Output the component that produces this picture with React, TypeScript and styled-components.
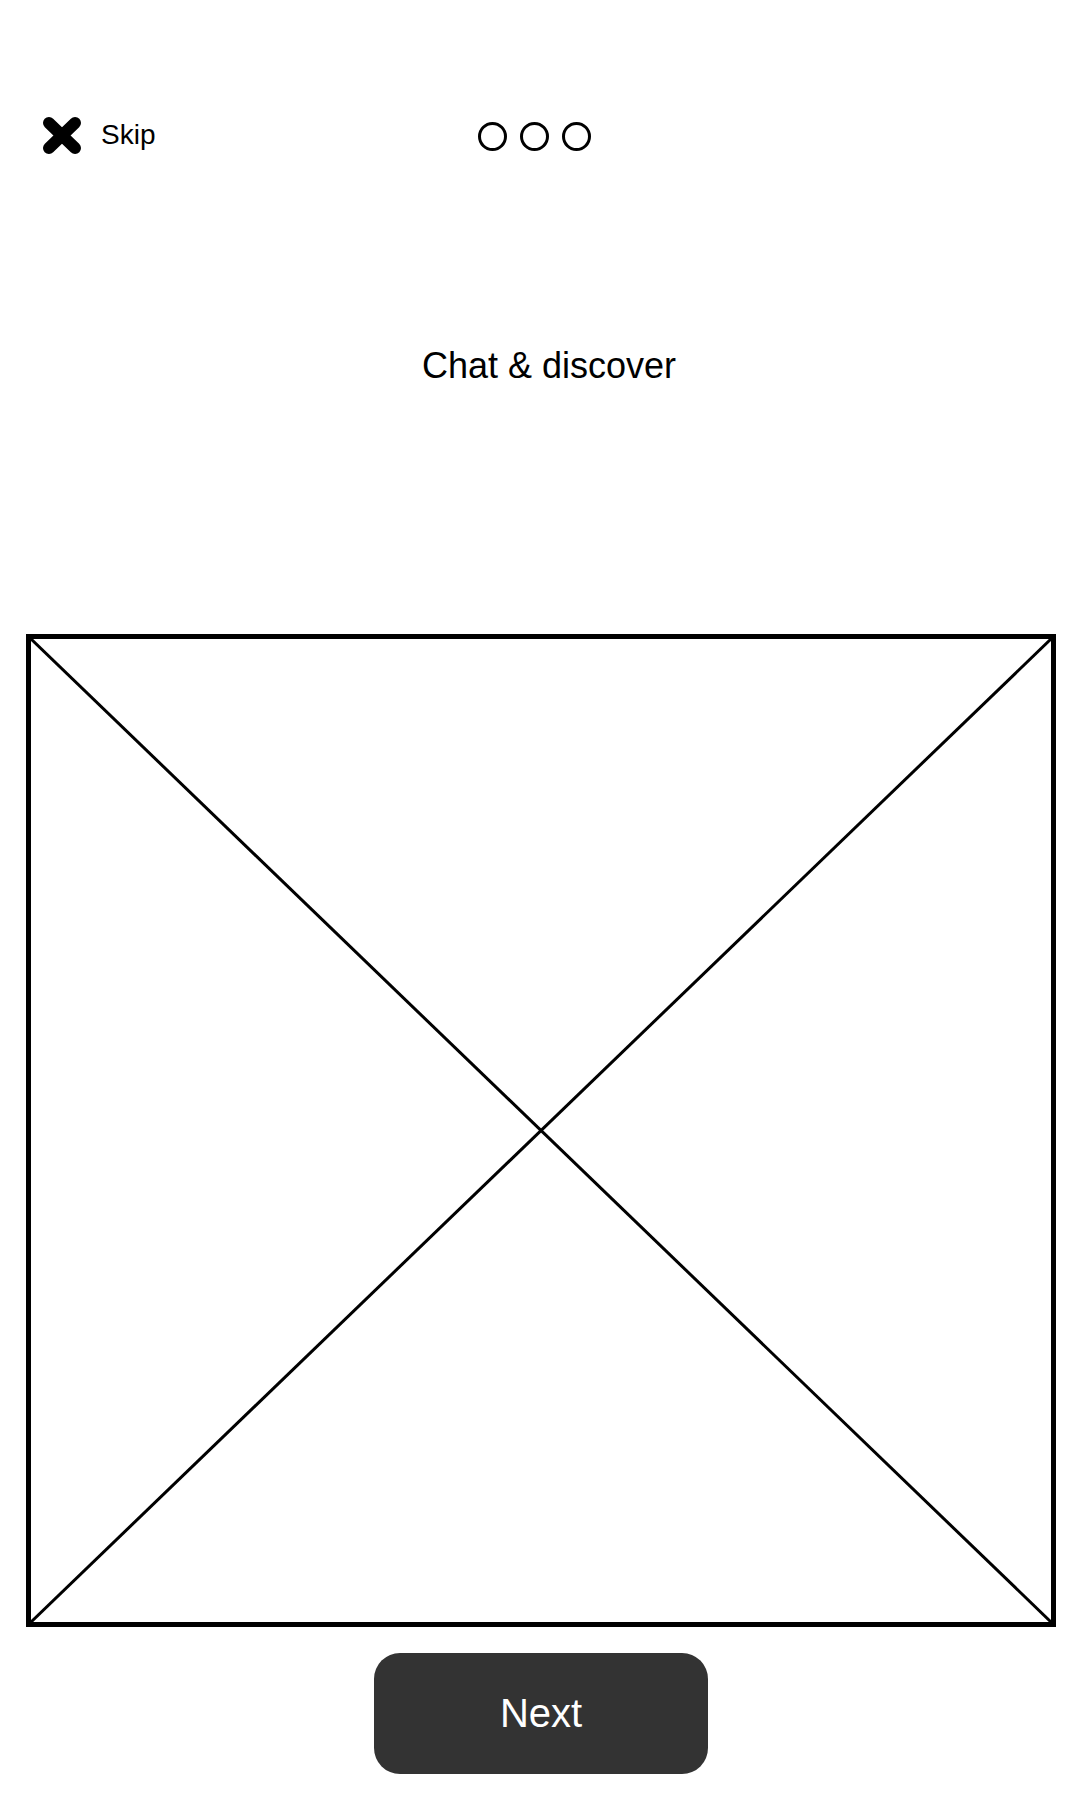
import styled, {createGlobalStyle} from 'styled-components'

const GlobalStyle = createGlobalStyle`
  body {
    margin: 0;
    background: #fff;
    font-family: 'Liberation Sans', Arial, sans-serif;
    color: #000;
  }
`

const Page = styled.div`
  width: 1080px;
  height: 1800px;
  display: flex;
  flex-direction: column;
  padding-top: 116px;
  box-sizing: border-box;
`

const Header = styled.div`
  display: grid;
  grid-template-columns: 1fr auto 1fr;
  align-items: center;
  padding-left: 42px;
  height: 39px;
`

const SkipButton = styled.button`
  display: flex;
  align-items: center;
  gap: 19px;
  border: none;
  background: none;
  padding: 0;
  cursor: pointer;
  font-family: inherit;
  justify-self: start;
`

const SkipLabel = styled.span`
  font-size: 28px;
  line-height: 1;
  margin-top: -2px;
  color: #000;
`

const Dots = styled.div`
  display: flex;
  gap: 13px;
  margin-left: -53px;
  margin-top: 2px;
`

const Dot = styled.span<{$active?: boolean}>`
  width: 29px;
  height: 29px;
  box-sizing: border-box;
  border: 3px solid #000;
  border-radius: 50%;
  background: ${(p) => (p.$active ? '#000' : 'transparent')};
`

const Title = styled.h1`
  margin: 193px 0 0;
  padding-left: 18px;
  text-align: center;
  font-size: 36px;
  line-height: 1;
  font-weight: normal;
`

const Placeholder = styled.div`
  margin: 250px 0 0 26px;
  width: 1030px;
  height: 993px;
  box-sizing: border-box;
  border: 5px solid #000;

  svg {
    display: block;
    width: 100%;
    height: 100%;
  }
`

const Footer = styled.div`
  display: flex;
  justify-content: center;
  padding-left: 2px;
  margin-top: 26px;
`

const NextButton = styled.button`
  width: 334px;
  height: 121px;
  border: none;
  border-radius: 26px;
  background: #333;
  color: #fff;
  font-family: inherit;
  font-size: 40px;
  display: flex;
  align-items: center;
  justify-content: center;
  cursor: pointer;
`

function CloseIcon() {
  return (
    <svg width="40" height="39" viewBox="0 0 40 39">
      <g stroke="#000" strokeWidth="12" strokeLinecap="round">
        <line x1="7" y1="7" x2="33" y2="32" />
        <line x1="33" y1="7" x2="7" y2="32" />
      </g>
    </svg>
  )
}

function App() {
  return (
    <>
      <GlobalStyle />
      <Page>
        <Header>
          <SkipButton>
            <CloseIcon />
            <SkipLabel>Skip</SkipLabel>
          </SkipButton>
          <Dots>
            <Dot />
            <Dot />
            <Dot />
          </Dots>
        </Header>
        <Title>Chat &amp; discover</Title>
        <Placeholder>
          <svg viewBox="0 0 100 100" preserveAspectRatio="none">
            <g stroke="#000" strokeWidth="3">
              <line x1="0" y1="0" x2="100" y2="100" vectorEffect="non-scaling-stroke" />
              <line x1="100" y1="0" x2="0" y2="100" vectorEffect="non-scaling-stroke" />
            </g>
          </svg>
        </Placeholder>
        <Footer>
          <NextButton>Next</NextButton>
        </Footer>
      </Page>
    </>
  )
}

export default App
